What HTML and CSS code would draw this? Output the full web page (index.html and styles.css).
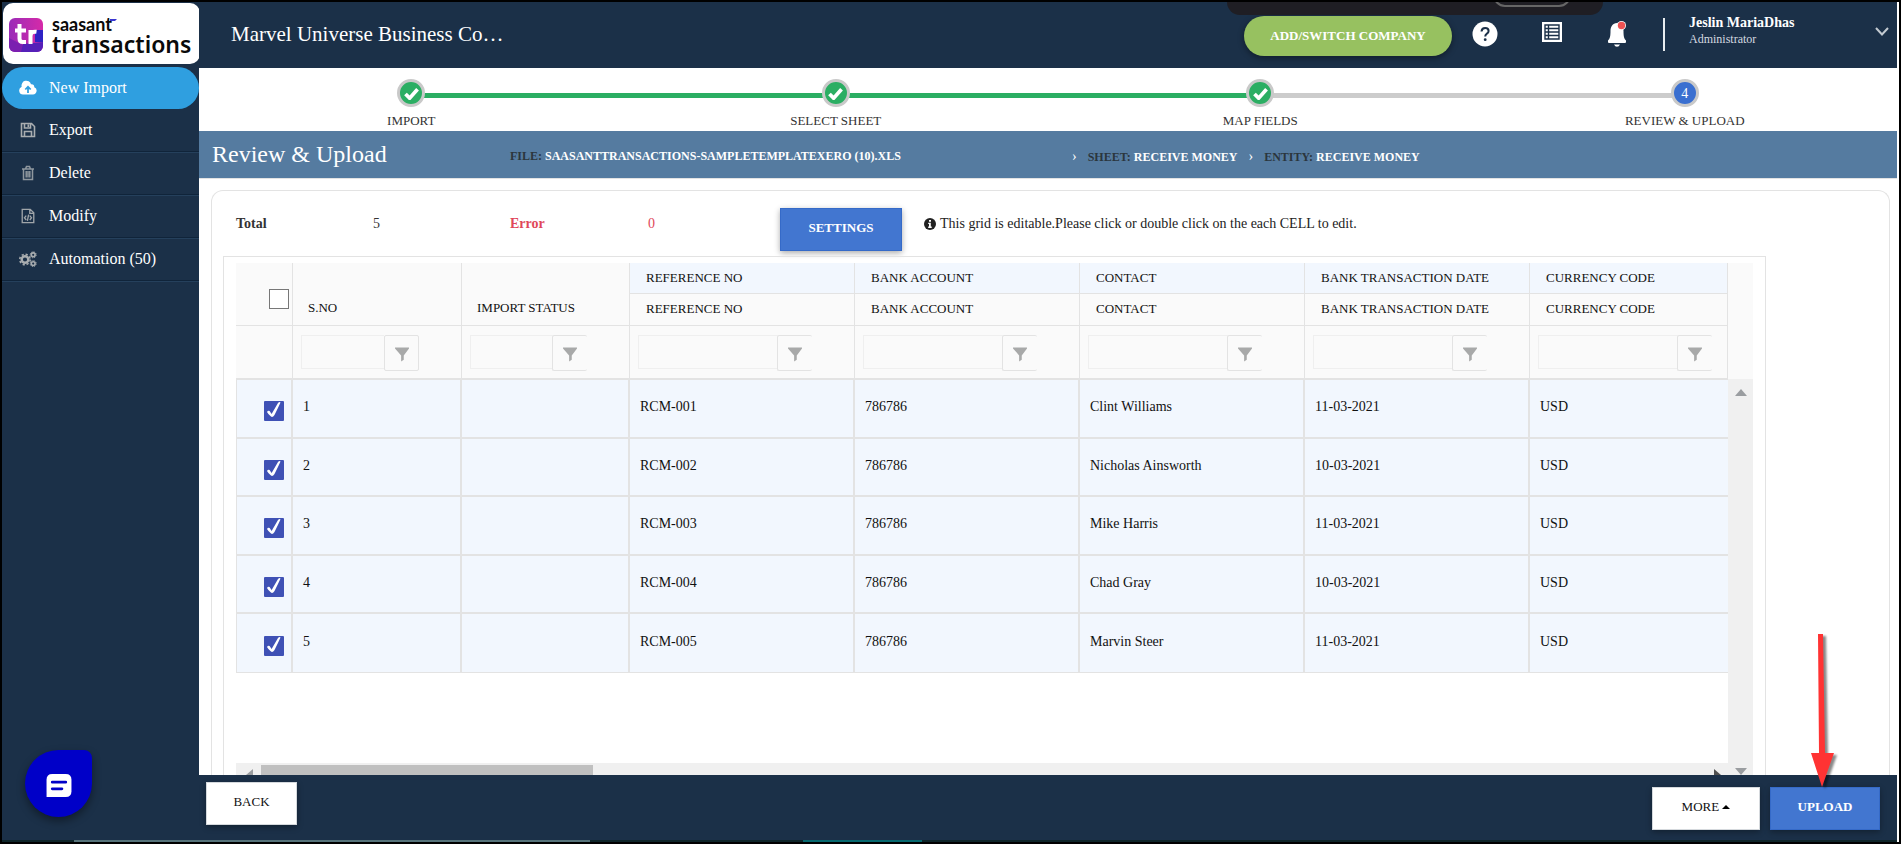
FILE: index.html
```html
<!DOCTYPE html>
<html lang="en">
<head>
<meta charset="utf-8">
<title>Review &amp; Upload</title>
<link rel="stylesheet" href="styles.css">
</head>
<body>
<svg width="0" height="0" class="defs" aria-hidden="true">
  <symbol id="funnel" viewBox="0 0 16 16"><path d="M0 0h16v1L10 9v5l-3 2V9L0 1z" fill="#a8a9a9"/></symbol>
  <symbol id="tick" viewBox="0 0 16 14"><path d="M1.500 7.500L6 12 14.500 2.500" fill="none" stroke="#fff" stroke-width="4"/></symbol>
  <symbol id="checked" viewBox="0 0 20 20"><path d="M3 11q1-1.800 2.600-1l2 3L14 2q1.500-1.500 2.500-.5Q14 7 10.500 14q-2 3-3.800 1.300Q4 13 3 11z" fill="#fff"/></symbol>
</svg>
<div class="app">
  <aside class="sidebar">
    <a class="logo" href="#" aria-label="saasant transactions">
      <svg class="logo-mark" viewBox="0 0 34 34">
        <defs><linearGradient id="lg" x1="0" y1="0" x2="1" y2="0"><stop offset="0" stop-color="#9a2bb8"/><stop offset="1" stop-color="#d62aa8"/></linearGradient></defs>
        <rect width="34" height="34" rx="6" fill="url(#lg)"/>
        <path d="M26 12h8v12h-8z" fill="#2e22c4"/><path d="M0 20l14 7v7H6a6 6 0 0 1-6-6z" fill="#7b1fb0"/><path d="M14 26l20-2v4a6 6 0 0 1-6 6H12z" fill="#5520b8"/>
        <path d="M10.500 6v14.500q0 3.500 3.500 3.500h3M6 12.500h11M21.500 26V12M21.500 18q.5-5 6-4.200" fill="none" stroke="#fff" stroke-width="4"/>
      </svg>
      <span class="logo-text"><span class="logo-top">saasant<svg viewBox="0 0 8 4"><path d="M1 1h7l-2 2H1z" fill="#3a35d0"/></svg></span><span class="logo-bottom">transactions</span></span>
    </a>
    <nav class="menu">
      <a class="item active" href="#"><svg viewBox="0 0 18 14"><path d="M4 13.500a4 4 0 0 1-1.300-7.700A4.800 4.800 0 0 1 12 3.200a3 3 0 0 1 3.300 3A3.800 3.800 0 0 1 14 13.500z" fill="#fff"/><path d="M9 12V6M6.300 8.500L9 5.700l2.700 2.800" fill="none" stroke="#2f9fe0" stroke-width="1.800"/></svg>New Import</a>
      <a class="item" href="#"><svg viewBox="0 0 16 16" fill="none" stroke="#a9adb0" stroke-width="1.600"><path d="M1.500 1.500h10l3 3v10h-13zM4.500 14v-4.500h7V14M4.500 2v4h6V2M8.300 2.500v2.500"/></svg>Export</a>
      <a class="item" href="#"><svg viewBox="0 0 16 16" fill="none" stroke="#8f979e" stroke-width="1.500"><path d="M2 4h12M5.500 4l1-2.500h3l1 2.500M3.500 4v10.500h9V4M6.200 6v6.500M8 6v6.500M9.800 6v6.500"/></svg>Delete</a>
      <a class="item" href="#"><svg viewBox="0 0 16 18" fill="none" stroke="#a0a5a9" stroke-width="1.500"><path d="M1.500 1.500h9l4 4v11h-13zM10 2v4h4.500M6 8.500L4 11l2 2.500M10 8.500l2 2.500-2 2.500M8.700 7.500l-1.400 7"/></svg>Modify</a>
      <a class="item" href="#"><svg viewBox="0 0 18 16" fill="none" stroke="#a9adb0"><circle cx="6" cy="8.500" r="3.300" stroke-width="2.400"/><circle cx="6" cy="8.500" r="5.200" stroke-width="1.600" stroke-dasharray="2.200 1.880"/><circle cx="14.200" cy="3.800" r="1.900" stroke-width="1.600"/><circle cx="14.200" cy="3.800" r="3" stroke-width="1" stroke-dasharray="1.300 1.050"/><circle cx="14.200" cy="12.600" r="1.900" stroke-width="1.600"/><circle cx="14.200" cy="12.600" r="3" stroke-width="1" stroke-dasharray="1.300 1.050"/></svg>Automation (50)</a>
    </nav>
  </aside>

  <header class="topbar">
    <div class="company">Marvel Universe Business Co…</div>
    <button class="switch" type="button">ADD/SWITCH COMPANY</button>
    <button class="icon-btn help" type="button" aria-label="Help"><svg viewBox="0 0 26 26"><circle cx="13" cy="13" r="12.500" fill="#fff"/><path d="M9.500 10.500q.3-3.500 3.700-3.500t3.400 3q0 1.500-1.700 2.600T13.200 15.500" fill="none" stroke="#1b3048" stroke-width="2"/><circle cx="13.200" cy="18.700" r="1.400" fill="#1b3048"/></svg></button>
    <button class="icon-btn list" type="button" aria-label="List"><svg viewBox="0 0 20 20"><path d="M0 0h20v20H0z" fill="#fff"/><path d="M3 3h14v14H3zM3 6.500h14M3 10h14M3 13.500h14M6.500 3v14" fill="none" stroke="#1b3048" stroke-width="1.400"/></svg></button>
    <button class="icon-btn bell" type="button" aria-label="Notifications"><svg viewBox="0 0 20 26"><path d="M10 2c-4.500 0-6.500 4-6.500 8 0 5-.5 7.500-2.500 9.500V21q0 1 1 1h16q1 0 1-1v-1.500c-2-2-2.500-4.500-2.500-9.500 0-4-2-8-6.500-8zM7 23.500h6q-1 2.300-3 2.300t-3-2.300z" fill="#fff"/><circle cx="14.500" cy="4.500" r="4.500" fill="#fff"/><circle cx="14.500" cy="4.500" r="3.700" fill="#ee5253"/></svg></button>
    <button class="user" type="button"><span class="user-text"><b>Jeslin MariaDhas</b><span>Administrator</span></span><svg viewBox="0 0 14 9"><path d="M1 1l6 6.500L13 1" fill="none" stroke="#c3cad1" stroke-width="2"/></svg></button>
    <div class="recorder"><span></span></div>
  </header>

  <main class="main">
    <ol class="steps">
      <li class="step done"><span class="dot"><svg><use href="#tick"/></svg></span>IMPORT</li>
      <li class="step done"><span class="dot"><svg><use href="#tick"/></svg></span>SELECT SHEET</li>
      <li class="step done last-done"><span class="dot"><svg><use href="#tick"/></svg></span>MAP FIELDS</li>
      <li class="step current"><span class="dot">4</span>REVIEW &amp; UPLOAD</li>
    </ol>
    <div class="band">
      <h1>Review &amp; Upload</h1>
      <div class="crumb file"><b>FILE:</b> SAASANTTRANSACTIONS-SAMPLETEMPLATEXERO (10).XLS</div>
      <div class="crumb"><i>›</i><b>SHEET:</b> RECEIVE MONEY<i>›</i><b>ENTITY:</b> RECEIVE MONEY</div>
    </div>
    <section class="card">
      <div class="summary">
        <b>Total</b><span>5</span><b class="err">Error</b><span class="err">0</span>
        <button class="btn blue" type="button">SETTINGS</button>
        <p><svg viewBox="0 0 12 12"><circle cx="6" cy="6" r="6" fill="#222"/><path d="M5 2h2v1.700H5zM4.200 4.800h2.600v3.800h.9V10H4.200V8.600h.8V6h-.8z" fill="#fff"/></svg>This grid is editable.Please click or double click on the each CELL to edit.</p>
      </div>
      <div class="panel">
        <div class="grid">
          <table>
            <colgroup><col class="c-check"><col class="c-no"><col class="c-status"><col><col><col><col><col class="c-cur"></colgroup>
            <thead>
              <tr class="group"><th rowspan="2" class="check"><input type="checkbox" aria-label="Select all"></th><th rowspan="2" class="low">S.NO</th><th rowspan="2" class="low">IMPORT STATUS</th><th>REFERENCE NO</th><th>BANK ACCOUNT</th><th>CONTACT</th><th>BANK TRANSACTION DATE</th><th>CURRENCY CODE</th></tr>
              <tr class="names"><th>REFERENCE NO</th><th>BANK ACCOUNT</th><th>CONTACT</th><th>BANK TRANSACTION DATE</th><th>CURRENCY CODE</th></tr>
              <tr class="filters"><td></td>
                <td><div class="filter boxed"><input type="text" aria-label="Filter S.NO"><button type="button" aria-label="Filter"><svg><use href="#funnel"/></svg></button></div></td>
                <td><div class="filter"><input type="text" aria-label="Filter import status"><button type="button" aria-label="Filter"><svg><use href="#funnel"/></svg></button></div></td>
                <td><div class="filter"><input type="text" aria-label="Filter reference no"><button type="button" aria-label="Filter"><svg><use href="#funnel"/></svg></button></div></td>
                <td><div class="filter"><input type="text" aria-label="Filter bank account"><button type="button" aria-label="Filter"><svg><use href="#funnel"/></svg></button></div></td>
                <td><div class="filter"><input type="text" aria-label="Filter contact"><button type="button" aria-label="Filter"><svg><use href="#funnel"/></svg></button></div></td>
                <td><div class="filter"><input type="text" aria-label="Filter date"><button type="button" aria-label="Filter"><svg><use href="#funnel"/></svg></button></div></td>
                <td><div class="filter end"><input type="text" aria-label="Filter currency"><button type="button" aria-label="Filter"><svg><use href="#funnel"/></svg></button></div></td></tr>
            </thead>
            <tbody>
              <tr><td class="check"><label><input type="checkbox" checked aria-label="Row 1"><svg><use href="#checked"/></svg></label></td><td>1</td><td></td><td>RCM-001</td><td>786786</td><td>Clint Williams</td><td>11-03-2021</td><td>USD</td></tr>
              <tr><td class="check"><label><input type="checkbox" checked aria-label="Row 2"><svg><use href="#checked"/></svg></label></td><td>2</td><td></td><td>RCM-002</td><td>786786</td><td>Nicholas Ainsworth</td><td>10-03-2021</td><td>USD</td></tr>
              <tr><td class="check"><label><input type="checkbox" checked aria-label="Row 3"><svg><use href="#checked"/></svg></label></td><td>3</td><td></td><td>RCM-003</td><td>786786</td><td>Mike Harris</td><td>11-03-2021</td><td>USD</td></tr>
              <tr><td class="check"><label><input type="checkbox" checked aria-label="Row 4"><svg><use href="#checked"/></svg></label></td><td>4</td><td></td><td>RCM-004</td><td>786786</td><td>Chad Gray</td><td>10-03-2021</td><td>USD</td></tr>
              <tr><td class="check"><label><input type="checkbox" checked aria-label="Row 5"><svg><use href="#checked"/></svg></label></td><td>5</td><td></td><td>RCM-005</td><td>786786</td><td>Marvin Steer</td><td>11-03-2021</td><td>USD</td></tr>
            </tbody>
          </table>
          <div class="vtrack"><svg viewBox="0 0 12 7"><path d="M6 0l6 7H0z" fill="#9a9da0"/></svg><svg viewBox="0 0 12 7"><path d="M0 0h12L6 7z" fill="#9a9da0"/></svg></div>
          <div class="htrack"><svg viewBox="0 0 7 12"><path d="M7 0v12L0 6z" fill="#9a9da0"/></svg><span class="thumb"></span><svg class="right" viewBox="0 0 7 12"><path d="M0 0l7 6-7 6z" fill="#505050"/></svg></div>
        </div>
      </div>
    </section>
  </main>

  <footer class="actions">
    <button class="btn white back" type="button">BACK</button>
    <button class="btn white more" type="button">MORE <svg viewBox="0 0 8 4"><path d="M4 0l4 4H0z"/></svg></button>
    <button class="btn blue upload" type="button">UPLOAD</button>
  </footer>
  <div class="taskline"><span class="wide"></span><span class="short"></span></div>
  <button class="chat" type="button" aria-label="Chat"><svg viewBox="0 0 26 24"><path d="M6 0h14q6 0 6 6v12q0 6-6 6H0V6q0-6 6-6z" fill="#fff"/><path d="M6 8.500h14M6 15.500h10" stroke="#0000c8" stroke-width="3" stroke-linecap="round"/></svg></button>
  <svg class="arrow" viewBox="0 0 32 156"><path d="M9 1h5l2 119h9L13 154 2 120h8z" fill="#ff3333"/></svg>
</div>
</body>
</html>
```
FILE: styles.css
```css
* { box-sizing: border-box; }
body { margin: 0; font-family: "Liberation Serif", serif; font-size: 14px; color: #222; background: #000; }
button, input { font: inherit; }
button { cursor: pointer; }
a { color: inherit; text-decoration: none; }
.defs { position: absolute; }

.app {
  position: relative;
  height: 100vh;
  border: 2px solid #000;
  padding-right: 2px;
  background: #fff;
  display: grid;
  grid-template: 66px minmax(0, 1fr) 65px 2px / 197px minmax(0, 1fr);
  overflow: hidden;
}

.sidebar { grid-area: 1 / 1 / 4 / 2; background: #1b3048; color: #fff; }
.logo { display: flex; align-items: center; gap: 9px; width: 197px; height: 61px; margin: 1px 0 3px 1px; padding: 2px 0 0 6px; background: #fff; border-radius: 10px; color: #0a0a0a; position: relative; }
.logo-mark { width: 34px; height: 34px; flex: none; }
.logo-text { display: flex; flex-direction: column; white-space: nowrap; }
.logo-top { font-family: Lato, sans-serif; font-weight: 700; font-size: 18px; line-height: 18px; display: flex; align-items: flex-start; }
.logo-top svg { width: 8px; height: 4px; margin: 3px 0 0 -3px; }
.logo-bottom { font-family: "Noto Sans", sans-serif; font-weight: 600; font-size: 23px; line-height: 22px; }
.item { display: flex; align-items: center; gap: 12px; height: 43px; padding-left: 17px; border-bottom: 1px solid #10243a; box-shadow: 0 1px #25405c; font-size: 16px; }
.item svg { width: 18px; height: 16px; flex: none; }
.item.active { height: 42px; border: 0; border-radius: 21px; background: #2f9fe0; box-shadow: none; }

.topbar { position: relative; grid-area: 1 / 2; display: flex; align-items: center; padding: 0 8px 2px 32px; background: #1b3048; color: #fff; }
.company { flex: 1; font-size: 21px; }
.switch { width: 208px; height: 40px; margin-top: 3px; border: 0; border-radius: 20px; background: #97c160; color: #fff; font-size: 13px; font-weight: 700; box-shadow: 0 2px 6px #0006; }
.icon-btn { padding: 0; border: 0; background: none; display: flex; }
.help { margin-left: 20px; }
.help svg { width: 26px; height: 26px; }
.list { margin: 0 0 4px 44px; }
.list svg { width: 20px; height: 20px; }
.bell { margin-left: 45px; }
.bell svg { width: 20px; height: 26px; }
.user { display: flex; align-items: center; justify-content: space-between; width: 226px; height: 33px; margin-left: 36px; padding: 0 0 6px 24px; border: 0; border-left: 2px solid #e8ecef; background: none; color: #fff; text-align: left; }
.user-text { display: flex; flex-direction: column; font-size: 14px; line-height: 17px; }
.user-text span { font-size: 12px; color: #d5dae0; }
.user svg { width: 14px; height: 9px; }
.recorder { position: absolute; top: 0; right: 294px; width: 376px; height: 13px; border-radius: 0 0 18px 18px; background: #1f1e24; overflow: hidden; }
.recorder span { position: absolute; right: 32px; bottom: 8px; width: 78px; height: 24px; border: 2px solid #666; border-radius: 12px; }

.main { grid-area: 2 / 2; min-height: 0; overflow: hidden; display: flex; flex-direction: column; }
.steps { display: grid; grid-template-columns: repeat(4, 1fr); flex: none; height: 63px; margin: 0; padding: 11px 0 0; list-style: none; color: #333; font-size: 13px; line-height: 15px; }
.step { position: relative; display: flex; flex-direction: column; align-items: center; gap: 6px; }
.step::before { content: ""; position: absolute; top: 14px; left: 50%; width: 100%; height: 5px; background: #2bae63; }
.last-done::before { background: #ccc; }
.current::before { display: none; }
.dot { position: relative; display: flex; align-items: center; justify-content: center; width: 28px; height: 28px; border: 3px solid #c9c9c9; border-radius: 50%; background: #2bae63; color: #fff; font-size: 14px; }
.dot svg { width: 15px; height: 13px; }
.current .dot { background: #3a6fd0; }

.band { display: flex; align-items: center; flex: none; height: 48px; padding: 0 0 2px 13px; background: #557ba0; border-bottom: 1px solid #e3e3e3; color: #fff; }
.band h1 { width: 298px; margin: 0; font-size: 24px; font-weight: 400; line-height: 28px; }
.crumb { padding-top: 6px; font-size: 12px; font-weight: 700; white-space: nowrap; }
.crumb b { color: #2b363d; }
.crumb i { margin: 0 11px; font-style: normal; font-weight: 400; font-size: 14px; }
.file { width: 551px; }

.card { flex: 1; min-height: 0; margin: 11px 7px 0 12px; padding: 0 12px 0 11px; border: 1px solid #e3e3e3; border-bottom: 0; border-radius: 12px 12px 0 0; display: flex; flex-direction: column; }
.summary { display: flex; align-items: flex-start; flex: none; height: 65px; padding: 17px 0 0 13px; }
.summary > b, .summary > span { width: 137px; line-height: 32px; color: #333; }
.summary .err { color: #e0475a; }
.summary > b.err { width: 138px; }
.summary > .btn { margin: 0 22px 0 -5px; width: 122px; }
.summary p { display: flex; align-items: center; gap: 4px; margin: 0; line-height: 32px; }
.summary p svg { width: 12px; height: 12px; }
.btn { height: 43px; padding: 0 0 3px; border-radius: 0; font-size: 13px; box-shadow: 0 2px 6px #0005; }
.blue { background: #4276d0; border: 1px solid #356ac8; color: #fff; font-weight: 700; }
.white { background: #fff; border: 1px solid #d5d9dd; color: #111; }

.panel { flex: 1; min-height: 0; margin-right: 111px; padding: 6px 12px 0; border: 1px solid #e3e3e3; border-bottom: 0; }
.grid { height: 100%; display: grid; grid-template: minmax(0, 1fr) 12px / minmax(0, 1fr) 25px; background: #fff; }
table { width: 100%; align-self: start; border-collapse: separate; border-spacing: 0; table-layout: fixed; color: #111; }
.c-check { width: 57px; }
.c-no { width: 169px; }
.c-status { width: 168px; }
.c-cur { width: 198px; }
th, td { padding: 0 0 0 16px; border-right: 1px solid #e3e3e3; border-bottom: 1px solid #e3e3e3; text-align: left; font-weight: 400; }
thead { background: #fafafa; }
th { padding-bottom: 1px; font-size: 13px; }
.group { height: 31px; }
.group th:not([rowspan]) { background: #f2f7fe; }
.names { height: 32px; }
.low { vertical-align: bottom; padding: 0 0 9px 15px; }
.filters { height: 54px; }
.filters td { padding: 2px 0 0 8px; border-bottom-width: 2px; }
.filter { display: flex; align-items: flex-start; margin-right: 42px; }
.filter.end { margin-right: 15px; }
.filter input { flex: 1; min-width: 0; height: 34px; border: 1px solid #efefef; border-right: 0; background: none; }
.filter button { display: flex; align-items: center; justify-content: center; width: 35px; height: 36px; padding: 2px 0 0; border: 1px solid #e3e3e3; border-right: 0; border-radius: 2px; background: none; }
.boxed button { border-right: 1px solid #e3e3e3; }
.filter svg { width: 14px; height: 15px; }
tbody tr { height: 59px; background: #f2f7fe; }
tbody tr:nth-child(even) { height: 58px; }
tbody td { padding: 0 0 3px 10px; border-right-width: 2px; border-bottom-width: 2px; }
tbody tr:last-child td { border-bottom-width: 1px; }
tbody td:last-child { border-right: 0; }
tbody td:first-child { border-left: 1px solid #e3e3e3; }
th.check { padding: 10px 3px 0 0; text-align: right; }
.check input { appearance: none; display: block; width: 20px; height: 20px; margin: 0 0 0 auto; border: 1px solid #777; background: #fff; }
tbody .check { padding: 5px 7px 0 0; }
.check label { display: grid; justify-content: end; }
.check label > * { grid-area: 1 / 1; }
.check svg { width: 20px; height: 20px; pointer-events: none; visibility: hidden; }
.check input:checked { border: 0; border-radius: 1px; background: #3f51b5; }
.check input:checked + svg { visibility: visible; }
.vtrack { grid-area: 1 / 2 / 3 / 3; display: flex; flex-direction: column; align-items: center; justify-content: space-between; padding-top: 10px; background: #f0f0f0; border-top: 116px solid #fafafa; }
.vtrack svg { width: 12px; height: 7px; }
.htrack { display: flex; background: #f0f0f0; padding: 2px 7px 0 10px; overflow: hidden; }
.htrack svg { width: 7px; height: 12px; margin-top: 4px; }
.thumb { width: 332px; margin-left: 8px; background: #c0c0c0; }
.htrack .right { margin-left: auto; }

.actions { grid-area: 3 / 2; display: flex; align-items: flex-start; padding: 12px 17px 0 7px; background: #1b3048; }
.back { width: 91px; margin-top: -5px; }
.more { width: 108px; margin-left: auto; }
.more svg { width: 8px; height: 4px; margin-bottom: 2px; }
.upload { width: 110px; margin-left: 10px; }
.taskline { grid-area: 4 / 1 / 5 / 3; display: flex; padding-left: 72px; background: #0e2529; }
.wide { width: 516px; background: #56737a; }
.short { width: 119px; margin-left: 213px; background: #07696f; }

.chat { position: absolute; left: 23px; bottom: 25px; display: flex; align-items: center; justify-content: center; width: 67px; height: 67px; padding: 4px 0 0; border: 0; border-radius: 50% 8px 50% 50%; background: #0000c8; box-shadow: 0 4px 8px #0006; }
.chat svg { width: 26px; height: 23px; }
.arrow { position: absolute; right: 58px; bottom: 53px; width: 32px; height: 156px; filter: drop-shadow(3px 2px 1px #0007); }
```
